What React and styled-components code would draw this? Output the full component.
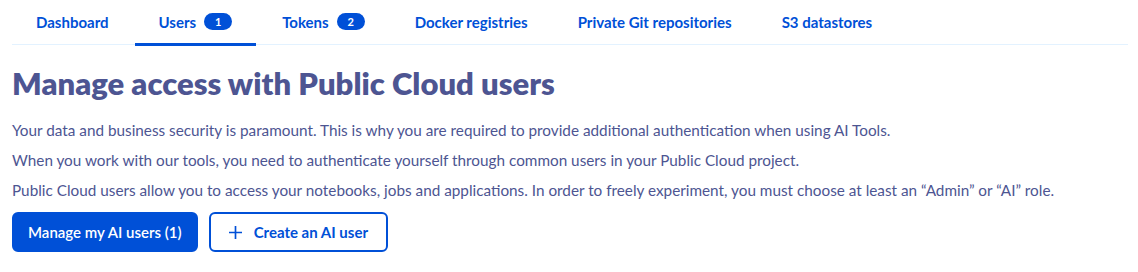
import React from 'react'
import styled, {createGlobalStyle} from 'styled-components'

const GlobalStyle = createGlobalStyle`
  body {
    margin: 0;
    background: #fff;
    font-family: 'Source Sans Pro', 'Lato', 'Noto Sans', sans-serif;
  }
`

const Page = styled.div`
  padding: 0 10px 0 12px;
  width: 1138px;
  box-sizing: border-box;
`

const TabBar = styled.div`
  display: flex;
  gap: 2px;
  height: 44px;
  border-bottom: 1px solid #e3f2ff;
`

const Tab = styled.div`
  display: flex;
  align-items: center;
  gap: 8px;
  padding: 0 24px;
  font-size: 15px;
  font-weight: 700;
  color: #0050d7;
  border-bottom: 3px solid ${p => (p.active ? '#0050d7' : 'transparent')};
  margin-bottom: -2px;
  box-sizing: border-box;
`

const Badge = styled.span`
  display: inline-flex;
  align-items: center;
  justify-content: center;
  min-width: 28px;
  height: 17px;
  border-radius: 9px;
  background: #0050d7;
  color: #fff;
  font-size: 11px;
  font-weight: 700;
`

const Title = styled.h1`
  margin: 18px 0 18px;
  font-size: 31px;
  line-height: 40px;
  font-weight: 800;
  color: #4d5592;
`

const Text = styled.p`
  margin: 0 0 12px;
  font-size: 15.3px;
  line-height: 18px;
  color: #4d5592;
`

const Actions = styled.div`
  display: flex;
  gap: 11px;
  margin-top: 13px;
`

const Button = styled.button`
  display: inline-flex;
  align-items: center;
  gap: 12px;
  height: 40px;
  padding: 0 ${p => (p.outline ? '18px' : '14px')};
  border-radius: 6px;
  font-family: inherit;
  font-size: 15px;
  font-weight: ${p => (p.outline ? 700 : 600)};
  border: 2px solid #0050d7;
  background: ${p => (p.outline ? '#fff' : '#0050d7')};
  color: ${p => (p.outline ? '#0050d7' : '#fff')};
  cursor: pointer;
  box-sizing: border-box;
`

const tabs = [
  {label: 'Dashboard'},
  {label: 'Users', badge: 1, active: true},
  {label: 'Tokens', badge: 2},
  {label: 'Docker registries'},
  {label: 'Private Git repositories'},
  {label: 'S3 datastores'},
]

export default function App() {
  return (
    <>
      <GlobalStyle />
      <Page>
        <TabBar>
          {tabs.map(t => (
            <Tab key={t.label} active={t.active}>
              {t.label}
              {t.badge ? <Badge>{t.badge}</Badge> : null}
            </Tab>
          ))}
        </TabBar>
        <Title>Manage access with Public Cloud users</Title>
        <Text>Your data and business security is paramount. This is why you are required to provide additional authentication when using AI Tools.</Text>
        <Text>When you work with our tools, you need to authenticate yourself through common users in your Public Cloud project.</Text>
        <Text>Public Cloud users allow you to access your notebooks, jobs and applications. In order to freely experiment, you must choose at least an “Admin” or “AI” role.</Text>
        <Actions>
          <Button>Manage my AI users (1)</Button>
          <Button outline>
            <svg width="13" height="13" viewBox="0 0 14 14">
              <path d="M7 0v14M0 7h14" stroke="#0050d7" strokeWidth="1.8" />
            </svg>
            Create an AI user
          </Button>
        </Actions>
      </Page>
    </>
  )
}
